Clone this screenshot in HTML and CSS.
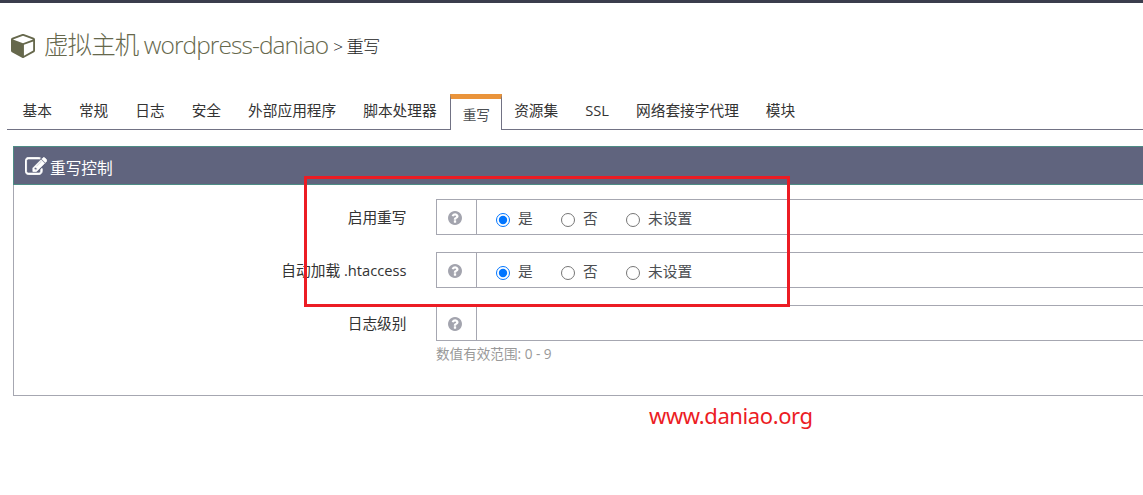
FILE: index.html
```html
<!DOCTYPE html>
<html lang="zh-CN">
<head>
<meta charset="utf-8">
<title>重写</title>
<link rel="stylesheet" href="styles.css">
</head>
<body>
<svg class="symbols" aria-hidden="true">
  <symbol id="question" viewBox="128 128 1536 1536"><path d="M1024 1376v-192q0-14-9-23t-23-9h-192q-14 0-23 9t-9 23v192q0 14 9 23t23 9h192q14 0 23-9t9-23zm256-672q0-88-55.500-163t-138.500-116-170-41q-243 0-371 213-15 24 8 42l132 100q7 6 19 6 16 0 25-12 53-68 86-92 34-24 86-24 48 0 85.500 26t37.500 59q0 38-20 61t-68 45q-63 28-115.500 86.500t-52.500 125.500v36q0 14 9 23t23 9h192q14 0 23-9t9-23q0-19 21.500-49.500t54.500-49.500q32-18 49-28.500t46-35 44.500-48 28-60.500 12.500-81zm384 192q0 209-103 385.500t-279.500 279.500-385.500 103-385.500-103-279.500-279.500-103-385.500 103-385.500 279.500-279.500 385.500-103 385.500 103 279.500 279.500 103 385.500z"/></symbol>
</svg>
<header class="topbar"></header>
<h1 class="title">
  <svg class="cube" viewBox="0 128 1664 1664"><path d="M896 1629l640-349v-636l-640 233v752zm-64-865l698-254-698-254-698 254zm832-252v768q0 35-18 65t-49 47l-704 384q-28 16-61 16t-61-16l-704-384q-31-17-49-47t-18-65v-768q0-40 23-73t61-47l704-256q22-8 44-8t44 8l704 256q38 14 61 47t23 73z"/></svg>
  <span class="host">虚拟主机 wordpress-daniao</span>
  <span class="crumb">&gt; 重写</span>
</h1>
<nav class="tabs">
  <a class="tab">基本</a>
  <a class="tab">常规</a>
  <a class="tab">日志</a>
  <a class="tab">安全</a>
  <a class="tab">外部应用程序</a>
  <a class="tab">脚本处理器</a>
  <a class="tab active">重写</a>
  <a class="tab">资源集</a>
  <a class="tab">SSL</a>
  <a class="tab">网络套接字代理</a>
  <a class="tab">模块</a>
</nav>
<section class="panel">
  <h2 class="panel-head">
    <svg class="edit" viewBox="0 128 1792 1408"><path d="M888 1184l116-116-152-152-116 116v56h96v96h56zm440-720q-16-16-33 1l-350 350q-17 17-1 33t33-1l350-350q17-17 1-33zm80 594v190q0 119-84.500 203.500t-203.500 84.500h-832q-119 0-203.500-84.500t-84.500-203.500v-832q0-119 84.500-203.500t203.500-84.500h832q63 0 117 25 15 7 18 23 3 17-9 29l-49 49q-14 14-32 8-23-6-45-6h-832q-66 0-113 47t-47 113v832q0 66 47 113t113 47h832q66 0 113-47t47-113v-126q0-13 9-22l64-64q15-15 35-7t20 29zm-96-738l288 288-672 672h-288v-288zm444 132l-92 92-288-288 92-92q28-28 68-28t68 28l152 152q28 28 28 68t-28 68z"/></svg>
    <span>重写控制</span>
  </h2>
  <div class="form">
    <div class="row">
      <span class="label">启用重写</span>
      <div class="field">
        <span class="help"><svg class="q"><use href="#question"/></svg></span>
        <label class="opt"><input class="radio" type="radio" name="enable" checked><span>是</span></label>
        <label class="opt"><input class="radio" type="radio" name="enable"><span>否</span></label>
        <label class="opt"><input class="radio" type="radio" name="enable"><span>未设置</span></label>
      </div>
    </div>
    <div class="row">
      <span class="label">自动加载 .htaccess</span>
      <div class="field">
        <span class="help"><svg class="q"><use href="#question"/></svg></span>
        <label class="opt"><input class="radio" type="radio" name="autoload" checked><span>是</span></label>
        <label class="opt"><input class="radio" type="radio" name="autoload"><span>否</span></label>
        <label class="opt"><input class="radio" type="radio" name="autoload"><span>未设置</span></label>
      </div>
    </div>
    <div class="row last">
      <span class="label">日志级别</span>
      <div class="field">
        <span class="help"><svg class="q"><use href="#question"/></svg></span>
      </div>
    </div>
    <p class="note">数值有效范围: 0 - 9</p>
  </div>
</section>
<div class="highlight"></div>
<div class="watermark">www.daniao.org</div>
</body>
</html>
```
FILE: styles.css
```css
* { box-sizing: border-box; }
body {
  margin: 0;
  height: 495px;
  overflow: hidden;
  background: #fff;
  color: #333;
  font: 14.7px/20px "Open Sans", "Noto Sans CJK SC", sans-serif;
}
.symbols { display: none; }
.topbar { height: 3px; background: #3b3d4d; }
.title {
  display: flex;
  align-items: center;
  height: 84px;
  margin: 0;
  padding-left: 11px;
  font-weight: 300;
  white-space: nowrap;
}
.cube { width: 24px; height: 24px; margin: 2px 9px 0 0; fill: #66684c; }
.host { font-size: 24.5px; line-height: 34px; letter-spacing: -0.93px; color: #66684c; }
.crumb { margin-left: 5px; font-size: 17.3px; letter-spacing: -0.6px; color: #222; padding-top: 3px; }
.tabs {
  display: flex;
  height: 43px;
  margin: 0 0 16px 7px;
  border-bottom: 1px solid #717284;
  padding: 7px 0 0 2px;
}
.tab { height: 36px; padding: 6px 13.5px 0; white-space: nowrap; }
.active {
  width: 52px;
  margin-left: -0.5px;
  padding: 6px 0 0 12px;
  border: 1px solid #717284;
  border-top: 5px solid #ea943b;
  border-bottom: 0;
  background: #fff;
  font-size: 13.7px;
  color: #4c4f53;
  letter-spacing: -0.2px;
}
.active + .tab { padding-left: 12.5px; }
.panel {
  height: 250px;
  margin-left: 13px;
  border: 1px solid #a6a7b1;
  border-width: 0 0 1px 1px;
}
.panel-head {
  display: flex;
  align-items: center;
  height: 39px;
  margin: 0 0 0 -1px;
  padding-left: 11px;
  border: 1px solid #4e8c85;
  border-right: 0;
  background: #60647e;
  color: #fff;
  font-size: 15.7px;
  font-weight: 400;
}
.edit { width: 22px; height: 18px; margin: 1px 3px 0 0; fill: #fff; stroke: #fff; stroke-width: 60; }
.panel-head span { padding-top: 4px; }
.form { padding-top: 14px; }
.row { display: flex; height: 36px; margin-bottom: 17px; }
.last { margin-bottom: 3px; }
.label { width: 392.5px; padding-top: 8px; text-align: right; white-space: nowrap; }
.field {
  display: flex;
  flex: 1;
  margin-left: 29.5px;
  border: 1px solid #a6a7b1;
  border-right: 0;
}
.help {
  display: flex;
  align-items: center;
  width: 40px;
  margin-right: 19px;
  padding-left: 11px;
  border-right: 1px solid #a6a7b1;
}
.q { width: 14px; height: 14px; margin-top: 1px; fill: #a3a4ae; }
.opt { display: flex; margin-right: 28.3px; padding-top: 8px; color: #4c4f53; }
.radio { width: 14px; height: 14px; margin: 5px 8px 0 0; }
.note { margin: 0 0 0 422px; font-size: 13.6px; color: #999; }
.highlight {
  position: absolute;
  left: 304px;
  top: 176px;
  width: 486px;
  height: 131px;
  border: 3px solid #ec1c24;
}
.watermark {
  margin: 6px 0 0 649px;
  font: 22px/26px "Noto Sans", sans-serif;
  letter-spacing: -0.4px;
  color: #ec1c24;
}
```
